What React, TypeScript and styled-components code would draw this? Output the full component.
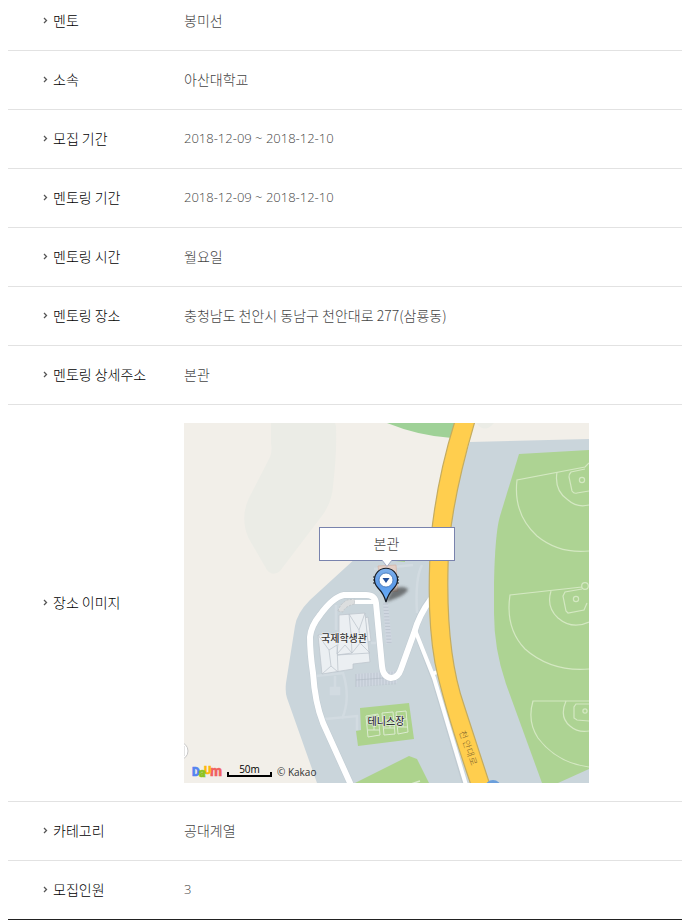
import React from 'react';
import styled, { createGlobalStyle, css } from 'styled-components';

const GlobalStyle = createGlobalStyle`
  body {
    margin: 0;
    background: #fff;
    font-family: 'Noto Sans CJK KR', sans-serif;
    font-size: 14px;
    line-height: 20px;
  }
`;

const Page = styled.main`
  padding-left: 8px;
`;

const InfoTable = styled.table`
  width: 100%;
  border-spacing: 0;
  border-bottom: 1px solid #222;
`;

const cell = css`
  padding: 18px 0 20px;
  text-align: left;
  vertical-align: middle;
  font-weight: 300;
`;

const Label = styled.th`
  ${cell}
  width: 141px;
  padding-left: 35px;
  color: #000;
  white-space: nowrap;
`;

const numericText = css`
  font-family: 'Open Sans', sans-serif;
  font-size: 13px;
`;

const Value = styled.td<{ $numeric?: boolean; $media?: boolean }>`
  ${cell}
  color: #444;
  ${({ $numeric }) => $numeric && numericText}
  ${({ $media }) => $media && 'padding: 18px 0;'}
`;

const Row = styled.tr`
  & > * {
    border-bottom: 1px solid #e2e2e2;
  }
  &:first-child > * {
    padding-top: 10px;
  }
  &:last-child > * {
    border-bottom: 0;
  }
`;

const LabelInner = styled.span`
  display: flex;
  align-items: center;
  gap: 5px;
`;

const ChevronIcon = styled.svg`
  width: 5px;
  height: 8px;
  flex: none;
`;

const MapFrame = styled.div`
  position: relative;
  max-width: 405px;
`;

const MapSvg = styled.svg`
  display: block;
  width: 100%;
`;

const Callout = styled.div`
  position: absolute;
  left: 50%;
  top: 104px;
  transform: translateX(-50%);
  box-sizing: border-box;
  width: 136px;
  padding: 5px 0 7px;
  border: 1px solid #7983ad;
  background: #fff;
  text-align: center;
`;

const CalloutTail = styled.svg`
  position: absolute;
  left: 50%;
  top: 100%;
  width: 10px;
  height: 7px;
  transform: translateX(-50%);
`;

const Attribution = styled.div`
  position: absolute;
  left: 8px;
  bottom: 3px;
  display: flex;
  align-items: flex-end;
  gap: 5px;
  color: #333;
  font-family: 'Open Sans', sans-serif;
  font-size: 10px;
  font-weight: 400;
  line-height: 16px;
`;

const Logo = styled.svg`
  width: 30px;
  height: 16px;
  overflow: visible;
  font-family: Roboto, sans-serif;
  font-weight: 900;
`;

const ScaleBar = styled.span`
  box-sizing: border-box;
  width: 45px;
  height: 14px;
  margin-bottom: 3px;
  line-height: 12px;
  text-align: center;
  color: #000;
  background: linear-gradient(#000, #000) left bottom / 2px 5px no-repeat,
    linear-gradient(#000, #000) right bottom / 2px 5px no-repeat,
    linear-gradient(#000, #000) left bottom / 100% 2px no-repeat;
`;

const Chevron = () => (
  <ChevronIcon viewBox="0 0 5 8" aria-hidden="true">
    <path d="M1 2l2.500 2.500L1 7" fill="none" stroke="#555" strokeWidth="1.300" />
  </ChevronIcon>
);

const ticks = (count: number) => Array.from({ length: count }, (_, i) => i);

const DaumLogo = () => (
  <Logo viewBox="0 0 30 16" role="img" aria-label="Daum">
    <text x="0" y="12" fontSize="12" fill="#5585f0" stroke="#5585f0" strokeWidth=".6">D</text>
    <text x="18" y="12" fontSize="14" fill="#f0625f" stroke="#f0625f" strokeWidth=".4">m</text>
    <text x="12" y="10" fontSize="11" fill="#ffb80c" stroke="#ffb80c" strokeWidth=".5">U</text>
    <text x="7" y="13" fontSize="12" fill="#8bc322" stroke="#8bc322" strokeWidth=".6">a</text>
  </Logo>
);

const LocationMap = () => (
  <MapSvg viewBox="0 0 405 360" role="img" aria-label="본관 지도">
    <defs>
      <linearGradient id="pin" x1="0" y1="0" x2="0" y2="1">
        <stop offset="0" stopColor="#7fb0ea" />
        <stop offset=".5" stopColor="#5c9ae8" />
        <stop offset="1" stopColor="#6cb4ff" />
      </linearGradient>
      <filter id="soft" x="-30%" y="-50%" width="160%" height="200%">
        <feGaussianBlur stdDeviation="1.5" />
      </filter>
    </defs>

    {/* ground */}
    <path d="M0 0H405V360H0Z" fill="#f2efe9" />
    <path d="M87 0V20Q89 30 84 38L65 75Q56 94 64 114L83 147Q89 154 96 148L137 94Q148 80 149 63Q153 30 152 3L151 0Z" fill="#ebece6" />
    <path d="M292 0Q301 11 310 0Z" fill="#ebece6" />
    <path d="M173 134L255 112L286 19L405 16V360H133L103 275Q101 269 102 260L111 203Q113 190 126 177Z" fill="#cad5db" />
    <path d="M203 0Q235 13 268 15L272 0Z" fill="#9fd197" />

    {/* ball fields */}
    <path d="M335 31L405 27V346L374 360H358L322 261Q310 226 310 190V160Q311 110 316 93Z" fill="#add393" />
    <g fill="none" stroke="#d4e8c2" strokeWidth="1.2">
      <path d="M405 40L401 44L333 57Q329 91 353 113Q375 131 405 128" />
      <path d="M373 49Q370 68 384 77Q393 85 405 82M401 46L387 49Q385 51 385 54L388 68Q390 71 393 70L405 68" />
      <circle cx="398" cy="57" r="2.6" />
      <path d="M398 164L326 172Q321 205 341 226Q367 249 405 246" />
      <path d="M367 168Q362 184 374 195Q388 207 405 199M398 166L381 169L379 173L382 188L384 190L400 187L403 180" />
      <circle cx="401" cy="163" r="3.3" />
      <circle cx="392" cy="176" r="2.6" />
      <path d="M405 278H349Q343 298 354 315Q373 340 405 344" />
      <path d="M382 278Q375 294 386 303Q394 310 405 308M405 281H392L390 284V295L393 297L405 298" />
      <circle cx="401" cy="288" r="2.1" />
    </g>

    {/* footpaths */}
    <g fill="none" stroke="#d2dbe1" strokeWidth="2.500">
      <path d="M132 253L160 250M159 250Q167 275 158 296M141 296L173 293V307M190 146L229 142M238 142Q231 155 233 190M152 182V207M187 220H192M151 253V265" />
      <path d="M147 265H155V271H147Z" fill="#d2dbe1" />
    </g>

    {/* tennis court and lower lawn */}
    <path d="M176 285L225 280L230 316L174 323L172 308L177 307Z" fill="#add38d" />
    <g fill="none" stroke="#dcebd0" strokeWidth="1">
      <path d="M182 293L194 291L196 312L184 314ZM198 290L209 289L211 311L200 312ZM212 289L222 288L224 309L214 311Z" />
      <path d="M183 300H195M184 307H196M190 300V307M199 297H210M200 305H211M206 297V305M213 296H223M214 304H224M219 296V304" />
    </g>
    <path d="M171 360L225 333L233 336L245 360Z" fill="#add38d" />
    <path d="M227 361L236 358" stroke="#dcebd0" strokeWidth="1.5" />

    {/* parking bays */}
    <g stroke="#aeb9c3" strokeWidth=".6" fill="#d0d7e1">
      <path d="M172 251L213 248V260L172 264Z" stroke="none" />
      <path d="M172 257L213 254" />
      {ticks(14).map((i) => (
        <path key={i} d={`M${172 + i * 3} ${251 - i * 0.2}v13`} />
      ))}
      <path d="M199 180L204 180L208 220L202 221Z" stroke="none" />
      {ticks(13).map((i) => (
        <path key={i} d={`M${199 + i * 0.3} ${181 + i * 3.2}h5`} />
      ))}
    </g>

    {/* main hall */}
    <path d="M194 143L212 142L214 168L198 170Z" fill="#e4cfc6" stroke="#d2b6a9" strokeWidth=".8" />
    <path d="M211 138L221 136V139Z" fill="#add38d" />

    {/* student hall */}
    <g fill="#ebeff2" stroke="#bfc7ce" strokeWidth=".8">
      <path d="M181 195L184 194L187 218L184 219Z" />
      <path d="M155 192L181 190L186 239L169 241V246L138 251L134 212L155 210Z" />
      <path fill="none" d="M165 191L167 211L168 230M165 191L175 207L181 190M175 207L176 220L168 230M176 220L186 230M134 212L145 227L153 222L154 249M145 227L147 243L138 251M147 243L154 249M155 210L153 231L161 222L168 230L153 232L186 230" />
    </g>
    <path d="M154 188Q156 181 163 177L171 176V181Q161 183 159 189Z" fill="#dcdedf" stroke="#c2c7cb" strokeWidth="1" strokeDasharray="2 1.5" />

    {/* service roads */}
    <g fill="none">
      <g stroke="#c0cbd2">
        <path strokeWidth="7" d="M167 362L139 300Q131 280 129 250Q126 230 126 214Q127 203 136 192Q149 174 160 172H182Q191 172 192 180L198 243Q199 254 207 255Q214 255 217 246L230 210Q235 192 245 178" />
        <path strokeWidth="5" d="M231 207L250 257L281 362" />
      </g>
      <g stroke="#fff">
        <path strokeWidth="6" d="M167 362L139 300Q131 280 129 250Q126 230 126 214Q127 203 136 192Q149 174 160 172H182Q191 172 192 180L198 243Q199 254 207 255Q214 255 217 246L230 210Q235 192 247 176" />
        <path strokeWidth="4" d="M231 207L250 255L282 362M248 251L256 248M171 179H190" />
      </g>
    </g>

    {/* trunk road */}
    <path d="M271 -2Q253 55 247 115Q242 190 251 240Q260 283 287 362H306L280 282Q262 230 264 145Q264 90 291 -2Z" fill="#ffce4e" stroke="#c4ac60" strokeWidth="1.2" />
    <circle cx="309" cy="365" r="8" fill="#6b9fdb" />
    <g transform="translate(275 309) rotate(70)">
      <text x="0 10 19 28" y="0" fontSize="9" fill="#80642c">천안대로</text>
    </g>

    <circle cx="-5" cy="328" r="9" fill="#fff" stroke="#c8c8c8" strokeWidth="1" />
    <path d="M-5 323H0V333H-5" fill="none" stroke="#c8c8c8" />

    <g fontSize="10" fontWeight="500" fill="#333" stroke="#f4f6f7" strokeWidth="1" paintOrder="stroke" textAnchor="middle">
      <text x="160" y="219">국제학생관</text>
      <text x="202" y="302">테니스장</text>
    </g>

    {/* pin */}
    <path d="M202 179L207 168Q217 161 224 166Q223 172 202 179Z" fill="#333" opacity=".6" filter="url(#soft)" />
    <path d="M190 153V161M214 153V161" stroke="#222" strokeWidth="1" strokeDasharray="2 1" />
    <path d="M202 179Q200 171 194 165A11.500 11.500 0 1 1 210 165Q204 171 202 179Z" fill="url(#pin)" stroke="#151a22" strokeWidth="1.2" />
    <circle cx="202" cy="157" r="7" fill="#fff" stroke="#3c70b5" strokeWidth=".8" />
    <path d="M198.500 155H205.500L202 160Z" fill="#24509b" />
  </MapSvg>
);

const PlaceMap = () => (
  <MapFrame>
    <LocationMap />
    <Callout>
      본관
      <CalloutTail viewBox="0 0 10 7" aria-hidden="true">
        <path d="M0 0L5 6.500L10 0" fill="#fff" stroke="#9aa1c0" strokeWidth=".8" />
      </CalloutTail>
    </Callout>
    <Attribution>
      <DaumLogo />
      <ScaleBar>50m</ScaleBar>
      <span>© Kakao</span>
    </Attribution>
  </MapFrame>
);

type Item = { label: string; value?: string; numeric?: boolean };

const items: Item[] = [
  { label: '멘토', value: '봉미선' },
  { label: '소속', value: '아산대학교' },
  { label: '모집 기간', value: '2018-12-09 ~ 2018-12-10', numeric: true },
  { label: '멘토링 기간', value: '2018-12-09 ~ 2018-12-10', numeric: true },
  { label: '멘토링 시간', value: '월요일' },
  { label: '멘토링 장소', value: '충청남도 천안시 동남구 천안대로 277(삼룡동)' },
  { label: '멘토링 상세주소', value: '본관' },
  { label: '장소 이미지' },
  { label: '카테고리', value: '공대계열' },
  { label: '모집인원', value: '3', numeric: true },
];

export default function App() {
  return (
    <Page>
      <GlobalStyle />
      <InfoTable>
        <tbody>
          {items.map(({ label, value, numeric }) => (
            <Row key={label}>
              <Label scope="row">
                <LabelInner>
                  <Chevron />
                  {label}
                </LabelInner>
              </Label>
              <Value $numeric={numeric} $media={!value}>
                {value ?? <PlaceMap />}
              </Value>
            </Row>
          ))}
        </tbody>
      </InfoTable>
    </Page>
  );
}
